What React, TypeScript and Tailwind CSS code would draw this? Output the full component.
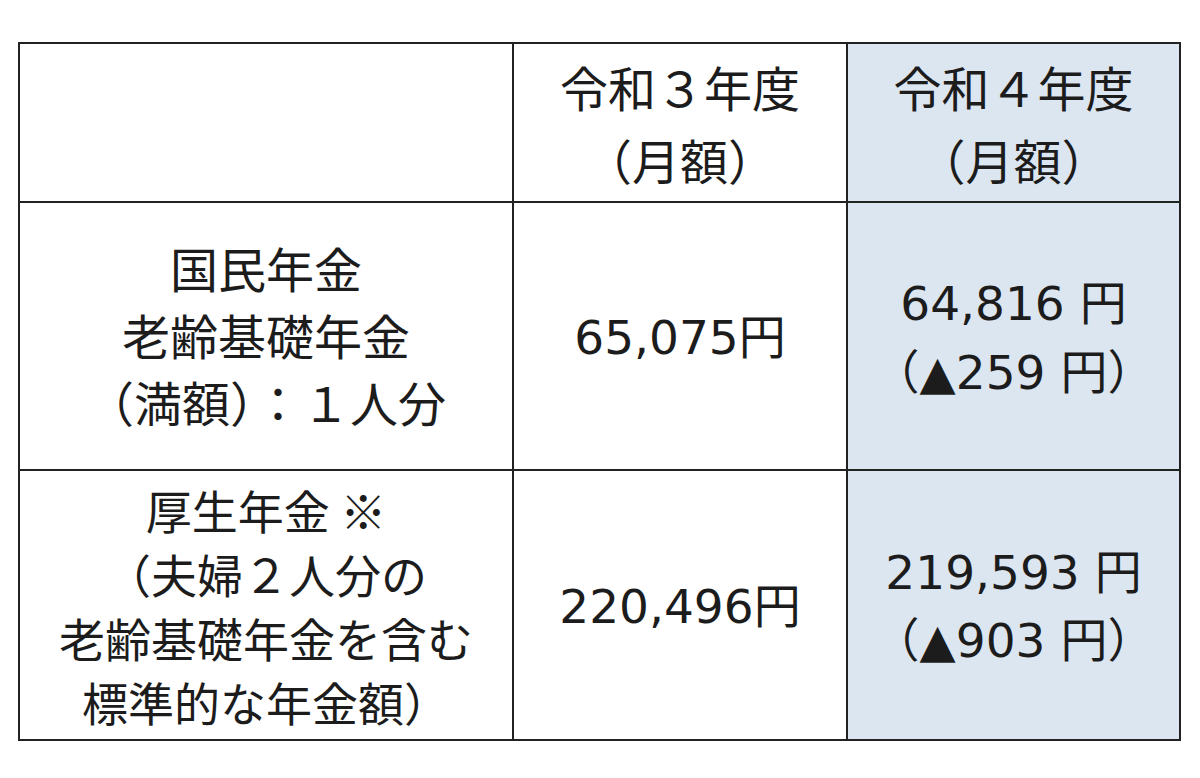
import React from "react";

// Meiryo-like table: CJK text in Noto Sans CJK JP, Latin digits in DejaVu (Verdana widths)
const line = "border-[#222]";
const num = "font-['DejaVu_Sans','Noto_Sans_CJK_JP',sans-serif]";
const cjk = "font-['Noto_Sans_CJK_JP','Noto_Sans',sans-serif]";

export default function App() {
  return (
    <div className={`w-[1200px] h-[778px] bg-white text-[#1c1c1c] text-[47px] pt-[42px] pl-[18px] ${cjk}`}>
      <div className={`w-[1163px] border-2 ${line} grid grid-cols-[494px_334px_331px] text-center`}>
        {/* header */}
        <div className={`h-[159px] border-r-2 border-b-2 ${line}`} />
        <div className={`h-[159px] border-r-2 border-b-2 ${line} flex flex-col justify-center leading-[73px] text-[48px]`}>
          <div>令和３年度</div>
          <div>（月額）</div>
        </div>
        <div className={`h-[159px] border-b-2 ${line} bg-[#dce6f1] flex flex-col justify-center leading-[73px] text-[48px]`}>
          <div>令和４年度</div>
          <div>（月額）</div>
        </div>

        {/* 国民年金 */}
        <div className={`h-[268px] border-r-2 border-b-2 ${line} flex flex-col justify-center leading-[67px] text-[48px] pb-1`}>
          <div>国民年金</div>
          <div>老齢基礎年金</div>
          <div>（満額）：１人分</div>
        </div>
        <div className={`h-[268px] border-r-2 border-b-2 ${line} flex items-center justify-center ${num}`}>
          <span>65,075<span className={cjk}>円</span></span>
        </div>
        <div className={`h-[268px] border-b-2 ${line} bg-[#dce6f1] flex flex-col justify-center leading-[65px] ${num}`}>
          <div>64,816 <span className={cjk}>円</span></div>
          <div><span className={cjk}>（</span>▲259 <span className={cjk}>円）</span></div>
        </div>

        {/* 厚生年金 */}
        <div className={`h-[268px] border-r-2 ${line} flex flex-col justify-center leading-[64px] text-[46px]`}>
          <div>厚生年金 ※</div>
          <div>（夫婦２人分の</div>
          <div>老齢基礎年金を含む</div>
          <div>標準的な年金額）</div>
        </div>
        <div className={`h-[268px] border-r-2 ${line} flex items-center justify-center ${num}`}>
          <span>220,496<span className={cjk}>円</span></span>
        </div>
        <div className={`h-[268px] bg-[#dce6f1] flex flex-col justify-center leading-[64px] ${num}`}>
          <div>219,593 <span className={cjk}>円</span></div>
          <div><span className={cjk}>（</span>▲903 <span className={cjk}>円）</span></div>
        </div>
      </div>
    </div>
  );
}
